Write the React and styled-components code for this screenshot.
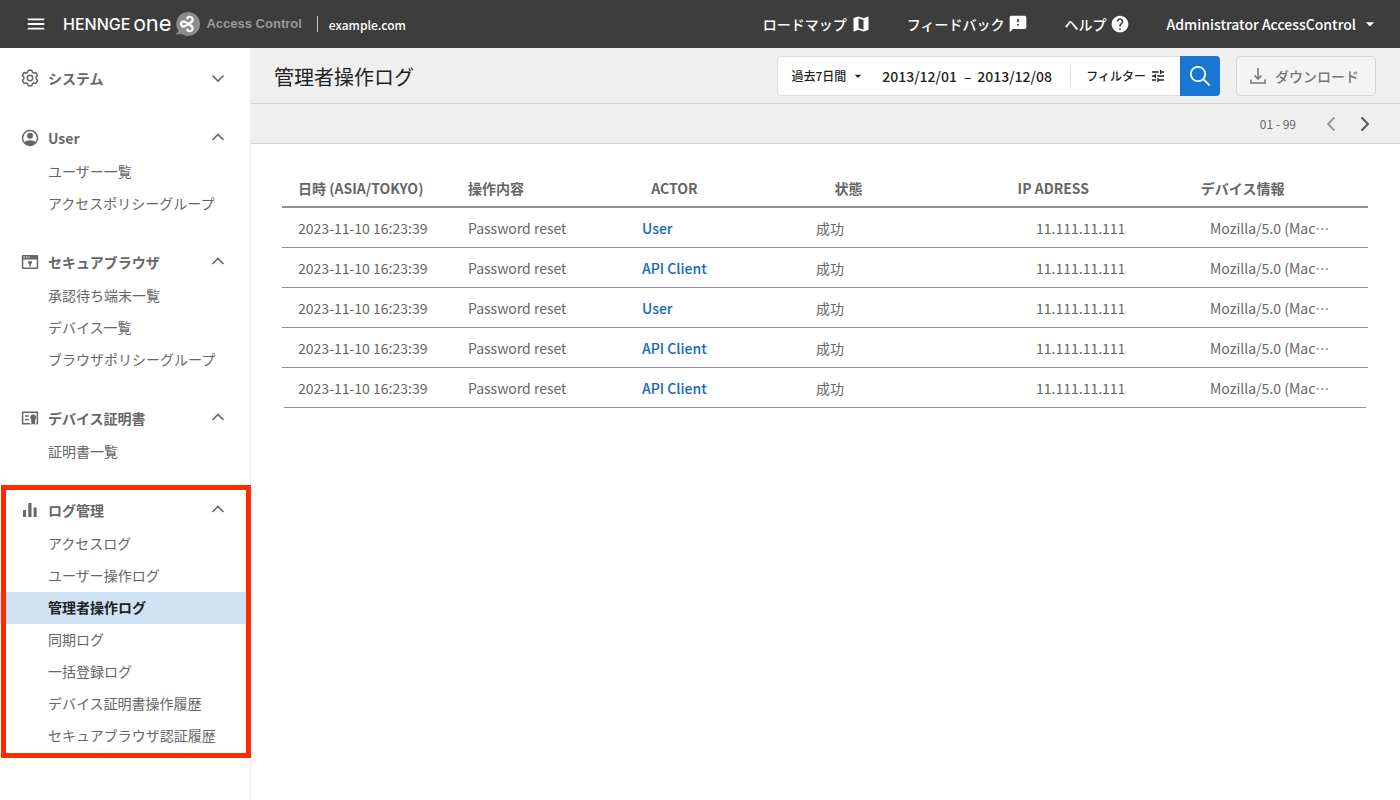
import React, { useState } from 'react';
import styled, { createGlobalStyle, css } from 'styled-components';
import { MdMenu, MdMap, MdFeedback, MdHelp, MdArrowDropDown, MdTune } from 'react-icons/md';

const GlobalStyle = createGlobalStyle`
    * {
        box-sizing: border-box;
    }
    body {
        margin: 0;
        background: #fff;
        color: #666;
        font-family: "Noto Sans CJK JP", "Noto Sans", sans-serif;
        font-size: 14px;
        line-height: 20px;
    }
    button, input {
        font: inherit;
        color: inherit;
    }
    button {
        padding: 0;
        border: 0;
        background: none;
        cursor: pointer;
    }
    a {
        color: inherit;
        text-decoration: none;
    }
    ul {
        margin: 0;
        padding: 0;
        list-style: none;
    }
    svg {
        display: block;
        flex: none;
    }
`;

const Page = styled.div`
    display: flex;
    flex-direction: column;
    min-height: 100vh;
`;

const Topbar = styled.header`
    display: flex;
    align-items: center;
    justify-content: space-between;
    height: 48px;
    padding: 0 20px 0 25px;
    background: #3d3d3d;
    color: #fff;
    font-weight: 500;
`;

const Brand = styled.div`
    display: flex;
    align-items: center;
`;

const MenuButton = styled.button`
    margin-right: 16px;
`;

const Logo = styled.a`
    display: flex;
    align-items: center;
    color: #fff;
    font-family: Inter, sans-serif;
    font-size: 16px;
    font-weight: 500;
    .one {
        margin: 0 4px 0 3px;
    }
    .ne {
        font-size: 22px;
        font-weight: 400;
    }
`;

const Product = styled.span`
    margin-left: 6px;
    padding-right: 15px;
    border-right: 1px solid #ccc;
    color: #999;
    font-family: "Liberation Sans", Arial, sans-serif;
    font-size: 13px;
    font-weight: 700;
    line-height: 16px;
`;

const Domain = styled.span`
    margin-left: 11px;
    padding-top: 2px;
    font-size: 12px;
`;

const TopNav = styled.nav`
    display: flex;
    align-items: center;
    gap: 36px;
`;

const TopLink = styled.a`
    display: flex;
    align-items: center;
    gap: 4px;
`;

const Account = styled.button`
    display: flex;
    align-items: center;
    gap: 4px;
`;

const Body = styled.div`
    display: flex;
    flex: 1;
`;

const Sidebar = styled.nav`
    flex: none;
    display: flex;
    flex-direction: column;
    gap: 24px;
    width: 251px;
    padding: 12px 0 24px;
    border-right: 1px solid #eee;
`;

const Group = styled.section`
    position: relative;
    ${props =>
        props.$marked && css`
            &::after {
                content: '';
                position: absolute;
                inset: -7px -1px -6px 1px;
                border: 5px solid #ff2a00;
                pointer-events: none;
            }
        `}
`;

const GroupButton = styled.button`
    display: flex;
    align-items: center;
    width: 100%;
    height: 36px;
    padding: 0 25px 0 20px;
    font-weight: 700;
    .label {
        flex: 1;
        margin-left: 8px;
        text-align: left;
    }
`;

const Item = styled.a`
    display: flex;
    align-items: center;
    height: 32px;
    padding: 0 0 2px 48px;
    ${props =>
        props.$active && css`
            background: #d0e3f5;
            color: #222;
            font-weight: 700;
        `}
`;

const Main = styled.main`
    flex: 1;
    min-width: 0;
`;

const TitleBar = styled.div`
    display: flex;
    align-items: center;
    justify-content: space-between;
    height: 56px;
    padding: 0 24px 0 23px;
    border-bottom: 1px solid #d0d0d0;
    background: #efefef;
`;

const Title = styled.h1`
    margin: 0;
    padding-top: 2px;
    color: #222;
    font-size: 20px;
    font-weight: 400;
    line-height: 28px;
`;

const Tools = styled.div`
    display: flex;
    gap: 16px;
`;

const SearchBox = styled.form`
    display: flex;
    align-items: center;
    height: 40px;
    padding-left: 13px;
    border: 1px solid #ddd;
    border-right: 0;
    border-radius: 4px;
    background: #fff;
    color: #222;
    font-weight: 500;
`;

const RangeButton = styled.button`
    display: flex;
    align-items: center;
    gap: 4px;
    margin-right: 16px;
    font-size: 12px;
`;

const DateInput = styled.input`
    width: 76px;
    padding: 0;
    border: 0;
    background: none;
    outline: none;
`;

const Dash = styled.span`
    width: 19px;
    text-align: center;
`;

const FilterButton = styled.button`
    display: flex;
    align-items: center;
    gap: 4px;
    height: 20px;
    margin-left: 17px;
    padding: 0 14px 0 15px;
    border-left: 1px solid #ddd;
    font-size: 12px;
`;

const SearchButton = styled.button`
    display: flex;
    align-items: center;
    justify-content: center;
    width: 40px;
    height: 40px;
    border-radius: 0 4px 4px 0;
    background: #1976d2;
    color: #fff;
`;

const DownloadButton = styled.button`
    display: flex;
    align-items: center;
    gap: 8px;
    height: 40px;
    padding: 0 16px 0 12px;
    border: 1px solid #d5d5d5;
    border-radius: 4px;
    background: #f4f4f4;
    color: #777;
    font-weight: 500;
`;

const PagerBar = styled.div`
    display: flex;
    align-items: center;
    justify-content: flex-end;
    height: 40px;
    padding-right: 24px;
    border-bottom: 1px solid #d0d0d0;
    background: #efefef;
    font-size: 12px;
`;

const PageButton = styled.button`
    display: flex;
    color: ${props => (props.disabled ? '#999' : '#555')};
    margin-left: ${props => (props.disabled ? '24px' : '12px')};
`;

const Table = styled.table`
    display: block;
    margin: 24px 32px 0 31px;
    overflow: hidden;
    border-radius: 0 0 4px 4px;
    thead, tbody {
        display: block;
    }
`;

const Row = styled.tr`
    display: grid;
    grid-template-columns: 170px 1fr 1fr 220px 1fr 1fr;
    align-items: center;
    height: 40px;
    border-bottom: 1px solid #8f8f8f;
    ${props =>
        props.$head && css`
            grid-template-columns: 170px repeat(5, 1fr);
            padding-top: 2px;
            border-bottom-width: 2px;
        `}
    th, td {
        padding: 0 16px;
        text-align: left;
        white-space: nowrap;
    }
`;

const ActorLink = styled.a`
    color: #1565c0;
    font-weight: 500;
`;

// the TC face sets the dots at mid height
const Ellipsis = styled.span`
    font-family: "Noto Sans CJK TC", sans-serif;
`;

const BrandMark = () => (
    <svg width="25" height="26" viewBox="0 0 25 26" fill="none">
        <path d="M13 1a12 12 0 1 1-6.500 22.100L.5 23.500l3.200-3.300A12 12 0 0 1 13 1z" fill="#8c8c8c" />
        <g stroke="#fff" strokeWidth="2.300" strokeLinecap="round" strokeLinejoin="round">
            <path d="M9.800 10.800a2.500 2.500 0 1 0 0 4.400L13.600 13z" />
            <path d="M12.400 7.200a2.800 2.800 0 1 1 4.500 3.300L13.600 13l3.300 2.500a2.800 2.800 0 1 1-4.500 3.300" />
        </g>
    </svg>
);

const GearIcon = () => (
    <svg width="20" height="20" viewBox="0 0 20 20" fill="none" stroke="currentColor" strokeWidth="1.500" strokeLinejoin="round">
        <path d="M8.300 2.200h3.400l.7 2.100 1.300.8 2.200-.5 1.700 3-1.500 1.600v1.600l1.500 1.600-1.700 3-2.200-.5-1.300.8-.7 2.100H8.300l-.7-2.100-1.300-.8-2.200.5-1.700-3 1.500-1.600V9.200L2.400 7.600l1.700-3 2.200.5 1.300-.8z" />
        <circle cx="10" cy="10" r="2.700" />
    </svg>
);

const UserIcon = () => (
    <svg width="20" height="20" viewBox="0 0 20 20" fill="currentColor">
        <circle cx="10" cy="10" r="7.500" fill="none" stroke="currentColor" strokeWidth="1.500" />
        <circle cx="10" cy="7.800" r="3" />
        <path d="M4 14.600c1.300-1.700 3.500-2.400 6-2.400s4.700.7 6 2.400a7.600 7.600 0 0 1-12 0z" />
    </svg>
);

const BrowserIcon = () => (
    <svg width="20" height="20" viewBox="0 0 20 20" fill="currentColor">
        <path fillRule="evenodd" d="M3 3h14a1.200 1.200 0 0 1 1.200 1.200v11.600A1.200 1.200 0 0 1 17 17H3a1.200 1.200 0 0 1-1.200-1.200V4.200A1.200 1.200 0 0 1 3 3zm.3 4.500v8h13.400v-8zM3.500 4.500v1.200h1.300V4.500zm2.500 0v1.200h1.300V4.500zm2.500 0v1.200h1.300V4.500z" />
        <path d="M8 9.200h4v1.600l-1.200 1.200v2.600H9.200V12L8 10.800z" />
    </svg>
);

const CertificateIcon = () => (
    <svg width="20" height="20" viewBox="0 0 20 20" fill="none" stroke="currentColor" strokeWidth="1.500">
        <path d="M10.300 15.700H2.600V4.200h14.800v11.500h-1" />
        <path d="M5 8h3.800M5 11.500h3.800" />
        <circle cx="13.200" cy="9.300" r="2.900" fill="currentColor" stroke="none" />
        <path d="M11.300 11.500h3.900V17l-1.900-1.200-2 1.200z" fill="currentColor" stroke="none" />
    </svg>
);

const ChartIcon = () => (
    <svg width="20" height="20" viewBox="0 0 20 20" fill="currentColor">
        <path d="M3 10h3v7H3zM8.300 3h3.200v14H8.300zM13.600 7.500h3V17h-3z" />
    </svg>
);

const Chevron = ({ open }) => (
    <svg width="14" height="14" viewBox="0 0 14 14" fill="none" stroke="currentColor" strokeWidth="1.600">
        <path d={open ? 'M1.500 9L7 3.500 12.500 9' : 'M1.500 4.500L7 10l5.500-5.500'} />
    </svg>
);

const SearchIcon = () => (
    <svg width="22" height="22" viewBox="0 0 22 22" fill="none" stroke="currentColor" strokeWidth="1.800">
        <circle cx="9" cy="9" r="7.200" />
        <path d="M14.200 14.200l6.500 6.300" />
    </svg>
);

const DownloadIcon = () => (
    <svg width="18" height="18" viewBox="0 0 18 18" fill="none" stroke="currentColor" strokeWidth="1.600">
        <path d="M9 1v11M5.500 8.500L9 12l3.500-3.500M2 12.500V16h14v-3.500" />
    </svg>
);

const Arrow = ({ next }) => (
    <svg width="22" height="22" viewBox="0 0 22 22" fill="none" stroke="currentColor" strokeWidth="2">
        <path d={next ? 'M7.500 4.500L14 11l-6.500 6.500' : 'M14.500 4.500L8 11l6.500 6.500'} />
    </svg>
);

const groups = [
    { label: 'システム', icon: GearIcon, open: false, items: [] },
    { label: 'User', icon: UserIcon, open: true, items: ['ユーザー一覧', 'アクセスポリシーグループ'] },
    { label: 'セキュアブラウザ', icon: BrowserIcon, open: true, items: ['承認待ち端末一覧', 'デバイス一覧', 'ブラウザポリシーグループ'] },
    { label: 'デバイス証明書', icon: CertificateIcon, open: true, items: ['証明書一覧'] },
    {
        label: 'ログ管理',
        icon: ChartIcon,
        open: true,
        marked: true,
        items: ['アクセスログ', 'ユーザー操作ログ', '管理者操作ログ', '同期ログ', '一括登録ログ', 'デバイス証明書操作履歴', 'セキュアブラウザ認証履歴']
    }
];

const columns = ['日時 (ASIA/TOKYO)', '操作内容', 'ACTOR', '状態', 'IP ADRESS', 'デバイス情報'];

const actors = ['User', 'API Client', 'User', 'API Client', 'API Client'];

const MenuGroup = ({ group, current }) => {
    const [open, setOpen] = useState(group.open);
    const Icon = group.icon;
    return (
        <Group $marked={group.marked}>
            <GroupButton type="button" aria-expanded={open} onClick={() => setOpen(!open)}>
                <Icon />
                <span className="label">{group.label}</span>
                <Chevron open={open} />
            </GroupButton>
            {open && (
                <ul>
                    {group.items.map(item => (
                        <li key={item}>
                            <Item href="#" $active={item === current}>{item}</Item>
                        </li>
                    ))}
                </ul>
            )}
        </Group>
    );
};

const App = () => (
    <Page>
        <GlobalStyle />
        <Topbar>
            <Brand>
                <MenuButton type="button" aria-label="Menu"><MdMenu size={22} /></MenuButton>
                <Logo href="#">
                    <span>HENNGE</span>
                    <span className="one">O<span className="ne">ne</span></span>
                    <BrandMark />
                </Logo>
                <Product>Access Control</Product>
                <Domain>example.com</Domain>
            </Brand>
            <TopNav>
                <TopLink href="#">ロードマップ<MdMap size={20} /></TopLink>
                <TopLink href="#">フィードバック<MdFeedback size={20} /></TopLink>
                <TopLink href="#">ヘルプ<MdHelp size={20} /></TopLink>
                <Account type="button">Administrator AccessControl<MdArrowDropDown size={20} /></Account>
            </TopNav>
        </Topbar>
        <Body>
            <Sidebar>
                {groups.map(group => (
                    <MenuGroup key={group.label} group={group} current="管理者操作ログ" />
                ))}
            </Sidebar>
            <Main>
                <TitleBar>
                    <Title>管理者操作ログ</Title>
                    <Tools>
                        <SearchBox onSubmit={e => e.preventDefault()}>
                            <RangeButton type="button">過去7日間<MdArrowDropDown size={16} /></RangeButton>
                            <DateInput aria-label="開始日" defaultValue="2013/12/01" />
                            <Dash>–</Dash>
                            <DateInput aria-label="終了日" defaultValue="2013/12/08" />
                            <FilterButton type="button">フィルター<MdTune size={16} /></FilterButton>
                            <SearchButton aria-label="検索"><SearchIcon /></SearchButton>
                        </SearchBox>
                        <DownloadButton type="button"><DownloadIcon />ダウンロード</DownloadButton>
                    </Tools>
                </TitleBar>
                <PagerBar>
                    <span>01 - 99</span>
                    <PageButton type="button" aria-label="前へ" disabled><Arrow /></PageButton>
                    <PageButton type="button" aria-label="次へ"><Arrow next /></PageButton>
                </PagerBar>
                <Table>
                    <thead>
                        <Row $head>
                            {columns.map(column => <th key={column} scope="col">{column}</th>)}
                        </Row>
                    </thead>
                    <tbody>
                        {actors.map((actor, i) => (
                            <Row key={i}>
                                <td>2023-11-10 16:23:39</td>
                                <td>Password reset</td>
                                <td><ActorLink href="#">{actor}</ActorLink></td>
                                <td>成功</td>
                                <td>11.111.11.111</td>
                                <td>Mozilla/5.0 (Mac<Ellipsis lang="zh-Hant">…</Ellipsis></td>
                            </Row>
                        ))}
                    </tbody>
                </Table>
            </Main>
        </Body>
    </Page>
);

export default App;
